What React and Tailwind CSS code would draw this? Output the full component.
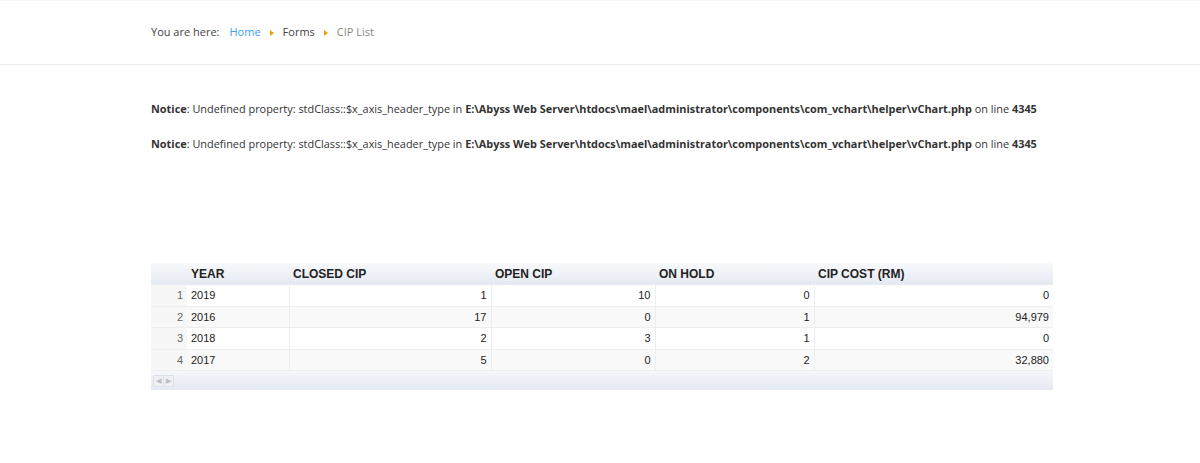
import React from 'react'

const rows = [
  { n: 1, year: '2019', closed: '1', open: '10', hold: '0', cost: '0' },
  { n: 2, year: '2016', closed: '17', open: '0', hold: '1', cost: '94,979' },
  { n: 3, year: '2018', closed: '2', open: '3', hold: '1', cost: '0' },
  { n: 4, year: '2017', closed: '5', open: '0', hold: '2', cost: '32,880' },
]

const Notice = () => (
  <p className="text-[10.9px] text-[#333]">
    <b>Notice</b>: Undefined property: stdClass::$x_axis_header_type in{' '}
    <b>E:\Abyss Web Server\htdocs\mael\administrator\components\com_vchart\helper\vChart.php</b> on line{' '}
    <b>4345</b>
  </p>
)

const Arrow = () => (
  <span className="mx-[9px] inline-block h-0 w-0 border-y-[3px] border-l-[4px] border-y-transparent border-l-[#f39c12] align-middle" />
)

export default function App() {
  return (
    <div className="min-h-[463px] bg-white" style={{ fontFamily: '"Open Sans", sans-serif' }}>
      <div className="h-[65px] border-b border-t border-[#ececec] border-t-[#f5f5f5]">
        <div className="flex h-full items-center pl-[151px] text-[11px] text-[#444]">
          <span>You are here:</span>
          <span className="ml-[10px] text-[#3a9ff5]">Home</span>
          <Arrow />
          <span>Forms</span>
          <Arrow />
          <span className="text-[#888]">CIP List</span>
        </div>
      </div>

      <div className="flex flex-col gap-[19px] pl-[151px] pt-[36px]">
        <Notice />
        <Notice />
      </div>

      <div className="ml-[151px] mt-[110px] w-[902px]" style={{ fontFamily: '"Liberation Sans", Arial, sans-serif' }}>
        <table className="w-full border-collapse text-[11px] text-[#222]">
          <thead>
            <tr className="h-[22px] bg-gradient-to-b from-[#f8f9fc] to-[#e5e9f2] text-left text-[12px]">
              <th className="w-[36px]"></th>
              <th className="w-[102px] px-[4px] font-bold">YEAR</th>
              <th className="w-[202px] px-[4px] font-bold">CLOSED CIP</th>
              <th className="w-[164px] px-[4px] font-bold">OPEN CIP</th>
              <th className="w-[159px] px-[4px] font-bold">ON HOLD</th>
              <th className="px-[4px] font-bold">CIP COST (RM)</th>
            </tr>
          </thead>
          <tbody>
            {rows.map((r, i) => (
              <tr key={r.n} className={`h-[21.5px] border-b border-[#eeeeee] ${i % 2 ? 'bg-[#f9f9f9]' : 'bg-white'}`}>
                <td className="bg-[#f7f7f7] pr-[4px] text-right text-[#666]">{r.n}</td>
                <td className="border-r border-[#eeeeee] px-[4px]">{r.year}</td>
                <td className="border-r border-[#eeeeee] px-[4px] text-right">{r.closed}</td>
                <td className="border-r border-[#eeeeee] px-[4px] text-right">{r.open}</td>
                <td className="border-r border-[#eeeeee] px-[4px] text-right">{r.hold}</td>
                <td className="px-[4px] text-right">{r.cost}</td>
              </tr>
            ))}
          </tbody>
        </table>
        <div className="flex h-[19px] items-center bg-gradient-to-b from-[#f6f7fb] to-[#e4e8f1] px-[2px]">
          <div className="flex h-[12px] items-center border border-[#dde0e6] bg-[#eef0f4]">
            <span className="px-[2px] text-[7px] leading-none text-[#b8bcc4]">◀</span>
            <span className="h-full w-px bg-[#dde0e6]" />
            <span className="px-[2px] text-[7px] leading-none text-[#b8bcc4]">▶</span>
          </div>
        </div>
      </div>
    </div>
  )
}
